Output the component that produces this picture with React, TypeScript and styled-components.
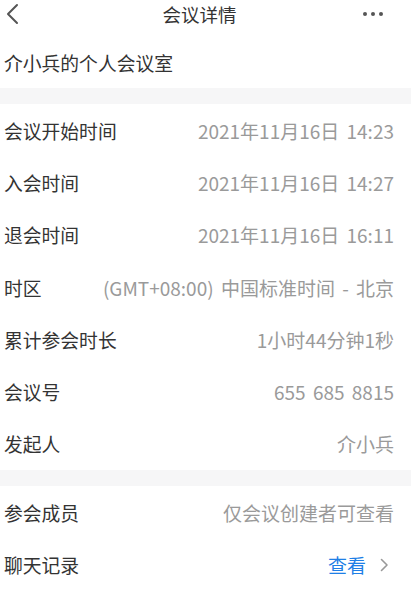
import React from "react";
import styled, { createGlobalStyle } from "styled-components";

const GlobalStyle = createGlobalStyle`
  html, body { margin: 0; padding: 0; background: #ffffff; }
  body { font-family: "Noto Sans CJK SC", "Noto Sans", sans-serif; -webkit-font-smoothing: antialiased; }
  * { box-sizing: border-box; }
`;

const Page = styled.div`
  width: 411px;
  height: 592px;
  overflow: hidden;
  background: #ffffff;
  display: flex;
  flex-direction: column;
`;

const NavBar = styled.div`
  height: 28px;
  display: grid;
  grid-template-columns: 60px 1fr 60px;
  align-items: center;
`;

const BackButton = styled.div`
  display: flex;
  align-items: center;
  padding-left: 5px;
`;

const Title = styled.div`
  text-align: center;
  font-size: 18.5px;
  color: #333333;
  line-height: 28px;
  padding-right: 12px;
`;

const MoreButton = styled.div`
  display: flex;
  justify-content: flex-end;
  align-items: center;
  gap: 3.5px;
  padding-right: 28px;
`;

const Dot = styled.span`
  width: 4.5px;
  height: 4.5px;
  border-radius: 50%;
  background: #555555;
`;

const RoomName = styled.div`
  height: 60px;
  display: flex;
  align-items: center;
  padding: 8px 0 0 4px;
  font-size: 18.8px;
  color: #333333;
`;

const Gap = styled.div`
  height: 16px;
  background: #f6f6f7;
`;

const Row = styled.div`
  height: 52.3px;
  display: flex;
  align-items: center;
  justify-content: space-between;
  padding: 0 17px 0 4px;
`;

const Label = styled.span`
  font-size: 18.8px;
  color: #333333;
  white-space: nowrap;
`;

const Value = styled.span<{ $link?: boolean }>`
  font-size: 19px;
  word-spacing: 3px;
  color: ${(p) => (p.$link ? "#1f7fe6" : "#9a9a9a")};
  white-space: nowrap;
  display: flex;
  align-items: center;
  gap: 14px;
`;

const rows1: [string, string][] = [
  ["会议开始时间", "2021年11月16日 14:23"],
  ["入会时间", "2021年11月16日 14:27"],
  ["退会时间", "2021年11月16日 16:11"],
  ["时区", "(GMT+08:00) 中国标准时间 - 北京"],
  ["累计参会时长", "1小时44分钟1秒"],
  ["会议号", "655 685 8815"],
  ["发起人", "介小兵"],
];

export default function App() {
  return (
    <Page>
      <GlobalStyle />
      <NavBar>
        <BackButton>
          <svg width="16" height="22" viewBox="0 0 16 22">
            <path d="M12 2 L3 11 L12 20" fill="none" stroke="#555" strokeWidth="2" strokeLinecap="round" strokeLinejoin="round" />
          </svg>
        </BackButton>
        <Title>会议详情</Title>
        <MoreButton>
          <Dot />
          <Dot />
          <Dot />
        </MoreButton>
      </NavBar>
      <RoomName>介小兵的个人会议室</RoomName>
      <Gap />
      {rows1.map(([l, v]) => (
        <Row key={l}>
          <Label>{l}</Label>
          <Value>{v}</Value>
        </Row>
      ))}
      <Gap />
      <Row>
        <Label>参会成员</Label>
        <Value>仅会议创建者可查看</Value>
      </Row>
      <Row>
        <Label>聊天记录</Label>
        <Value $link>
          查看
          <svg width="9" height="14" viewBox="0 0 9 14" style={{ marginRight: 5 }}>
            <path d="M1.5 1.5 L7 7 L1.5 12.5" fill="none" stroke="#999" strokeWidth="1.6" strokeLinecap="round" strokeLinejoin="round" />
          </svg>
        </Value>
      </Row>
    </Page>
  );
}
